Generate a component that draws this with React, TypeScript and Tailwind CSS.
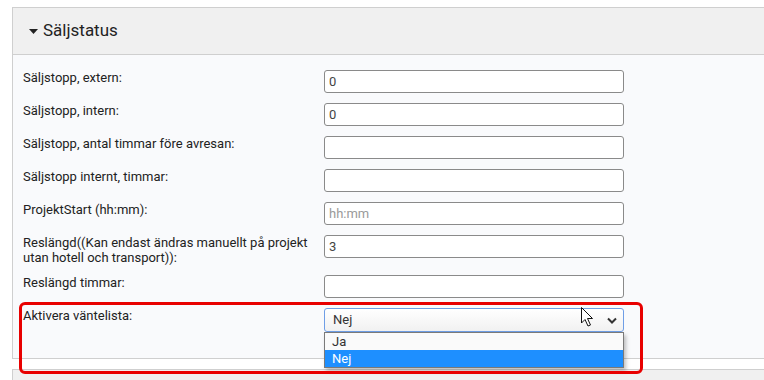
import React from "react";

type Row = {
  label: string;
  value?: string;
  placeholder?: string;
};

const rows: Row[] = [
  { label: "Säljstopp, extern:", value: "0" },
  { label: "Säljstopp, intern:", value: "0" },
  { label: "Säljstopp, antal timmar före avresan:" },
  { label: "Säljstopp internt, timmar:" },
  { label: "ProjektStart (hh:mm):", placeholder: "hh:mm" },
  {
    label:
      "Reslängd((Kan endast ändras manuellt på projekt utan hotell och transport)):",
    value: "3",
  },
  { label: "Reslängd timmar:" },
];

function Cursor() {
  return (
    <svg
      width="16"
      height="22"
      viewBox="0 0 16 22"
      className="absolute left-[580px] top-[306px]"
    >
      <path
        d="M1.5 1.5 L1.5 17 L5 13.5 L8 20 L10.5 19 L7.5 12.5 L12.5 12.5 Z"
        fill="#fff"
        stroke="#111"
        strokeWidth="1"
        strokeLinejoin="round"
      />
    </svg>
  );
}

export default function App() {
  return (
    <div className="relative w-[764px] h-[380px] overflow-hidden bg-white pt-[7px] pl-3 font-['Roboto',sans-serif] text-[#222]">
      <div className="w-[800px] border border-r-0 border-[#cfcfcf]">
        <div className="flex h-[47px] items-center gap-[5px] border-b border-[#cfcfcf] bg-[#f0f0f0] pl-[16px]">
          <svg width="9" height="5" viewBox="0 0 9 5" className="mt-[1px]">
            <path d="M0 0 L9 0 L4.5 5 Z" fill="#222" />
          </svg>
          <span className="text-[17px]">Säljstatus</span>
        </div>
        <div className="flex flex-col gap-[10px] bg-[#f9fafc] pb-[26px] pl-[10px] pt-[15px]">
          {rows.map((r) => (
            <div key={r.label} className="flex items-start">
              <label className="mr-[11px] w-[290px] text-[13px] leading-[15px]">
                {r.label}
              </label>
              <input
                readOnly
                value={r.value ?? ""}
                placeholder={r.placeholder}
                className="h-[23px] w-[300px] rounded-[3px] border border-[#8a8a8a] bg-white px-1 text-[13px] text-[#444] placeholder:text-[#9a9a9a]"
              />
            </div>
          ))}
          <div className="flex items-start">
            <label className="mr-[11px] w-[290px] text-[13px] leading-[15px]">
              Aktivera väntelista:
            </label>
            <div className="relative w-[300px]">
              <div className="flex h-[24px] items-center justify-between rounded-[3px] border border-[#6f9ee6] bg-gradient-to-b from-white to-[#f1f1f1] pl-2 pr-[6px] text-[13px] text-[#333]">
                <span>Nej</span>
                <svg width="10" height="7" viewBox="0 0 10 7">
                  <path
                    d="M1 1.5 L5 5.5 L9 1.5"
                    fill="none"
                    stroke="#333"
                    strokeWidth="2"
                  />
                </svg>
              </div>
              <div className="absolute left-0 top-[24px] w-[300px] border border-[#7a7a7a] bg-[#fafafa] text-[13px] leading-[17px] shadow-[2px_3px_4px_rgba(0,0,0,0.25)]">
                <div className="pl-[7px] text-[#333]">Ja</div>
                <div className="bg-[#1e8fff] pl-[7px] text-white">Nej</div>
              </div>
            </div>
          </div>
        </div>
      </div>
      <div className="mt-[10px] h-10 w-[800px] border border-r-0 border-[#cfcfcf] bg-[#f0f0f0]" />
      <div className="pointer-events-none absolute left-[19px] top-[302px] h-[72px] w-[624px] rounded-[6px] border-[3px] border-[#e80000]" />
      <Cursor />
    </div>
  );
}
